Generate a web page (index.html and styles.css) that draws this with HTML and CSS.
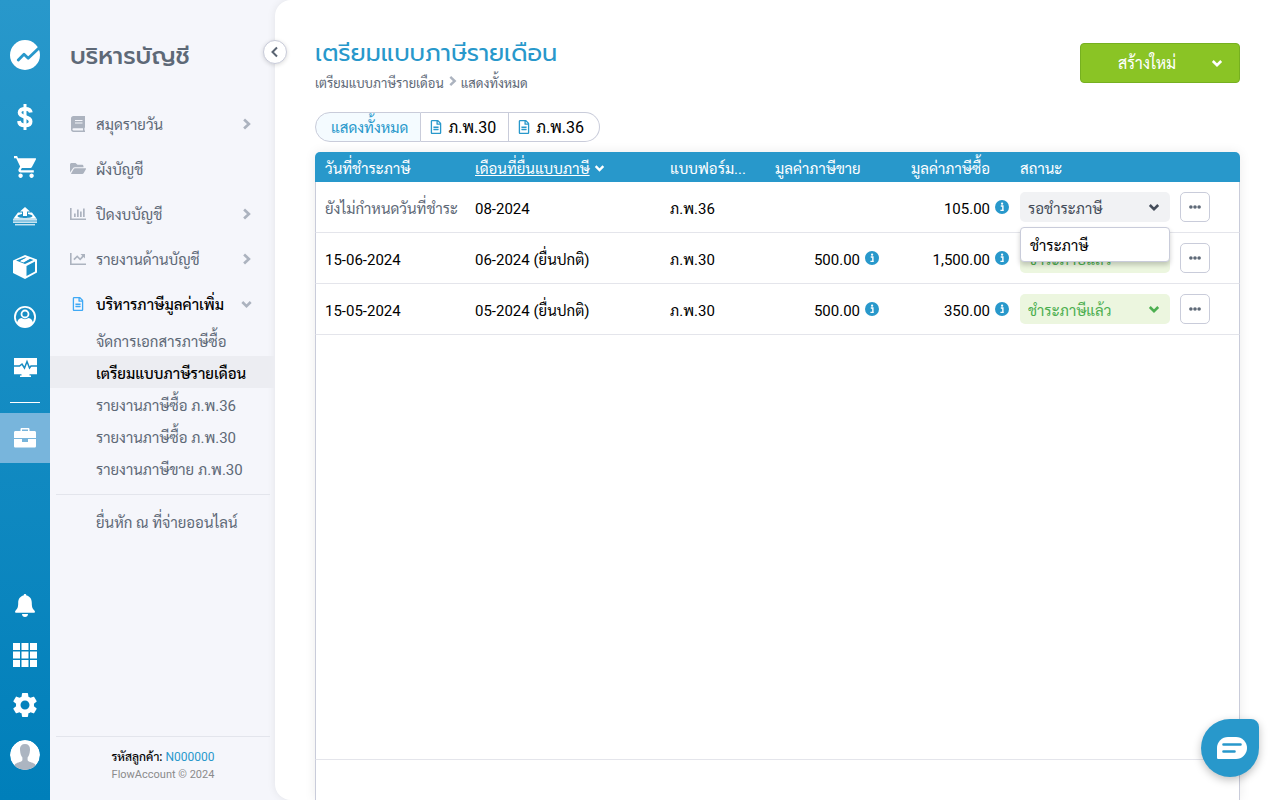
FILE: index.html
```html
<!DOCTYPE html>
<html lang="th">
<head>
<meta charset="utf-8">
<meta name="viewport" content="width=device-width, initial-scale=1">
<title>เตรียมแบบภาษีรายเดือน</title>
<link rel="stylesheet" href="styles.css">
</head>
<body>
<svg class="defs" aria-hidden="true">
  <symbol id="right" viewBox="0 0 10 10"><path d="M3 1.200 7 5 3 8.800" fill="none" stroke="currentColor" stroke-width="2.200"/></symbol>
  <symbol id="down" viewBox="0 0 12 12"><path d="M1.800 4 6 8.200 10.200 4" fill="none" stroke="currentColor" stroke-width="2.600"/></symbol>
  <symbol id="doc" viewBox="0 0 384 512"><path fill="currentColor" d="M288 248v28c0 6.600-5.400 12-12 12H108c-6.600 0-12-5.400-12-12v-28c0-6.600 5.400-12 12-12h168c6.600 0 12 5.400 12 12zm-12 72H108c-6.600 0-12 5.400-12 12v28c0 6.600 5.400 12 12 12h168c6.600 0 12-5.400 12-12v-28c0-6.600-5.400-12-12-12zm108-188.100V464c0 26.500-21.500 48-48 48H48c-26.500 0-48-21.500-48-48V48C0 21.500 21.500 0 48 0h204.100C264.800 0 277 5.100 286 14.100L369.900 98c9 8.900 14.100 21.200 14.100 33.900zm-128-80V128h76.100L256 51.900zM336 464V176H232c-13.300 0-24-10.700-24-24V48H48v416h288z"/></symbol>
  <symbol id="info" viewBox="0 0 16 16"><circle cx="8" cy="8" r="8" fill="currentColor"/><path d="M6.600 6.900h2.400v4.600M6.200 11.800h3.800" stroke="#fff" stroke-width="1.600" fill="none"/><circle cx="8.100" cy="4.200" r="1.300" fill="#fff"/></symbol>
  <symbol id="dots" viewBox="0 0 12 4"><circle cx="1.900" cy="2" r="1.800"/><circle cx="6" cy="2" r="1.800"/><circle cx="10.100" cy="2" r="1.800"/></symbol>
</svg>
<div class="app">
  <nav class="rail" aria-label="เมนูหลัก">
    <a class="rail-logo" href="#" aria-label="FlowAccount"><svg width="30" height="30" viewBox="0 0 30 30"><circle cx="15" cy="15" r="15" fill="#fff"/><path d="M8.300 20l5.700-5.800 4.200 4L30.500 6.500" fill="none" stroke="#2898cb" stroke-width="2.800" stroke-linecap="round" stroke-linejoin="round"/></svg></a>
    <a class="rail-item" href="#" aria-label="รายรับ"><svg width="16" height="26" viewBox="0 0 16 26"><path d="M13.800 8.500C13.500 6 11.500 4.800 8.200 4.800 5 4.800 2.600 6 2.600 8.600c0 5.600 11 3 11 8.800 0 2.600-2.400 4-5.600 4-3.400 0-5.800-1.400-6-4.400" fill="none" stroke="#fff" stroke-width="3.800"/><path d="M6.500 0h3v26h-3z" fill="#fff"/></svg></a>
    <a class="rail-item" href="#" aria-label="รายจ่าย"><svg width="22" height="22" viewBox="1 2 20 20"><path fill="#fff" d="M7 18c-1.100 0-2 .9-2 2s.9 2 2 2 2-.9 2-2-.9-2-2-2zM1 2v2h2l3.600 7.600-1.400 2.400c-.7 1.300.3 3 1.800 3h12v-2H7.400c-.1 0-.2-.1-.2-.3l.9-1.700h7.500c.7 0 1.400-.4 1.700-1L21 5c.2-.6 0-1-.9-1H4.700L3.800 2zM17 18c-1.100 0-2 .9-2 2s.9 2 2 2 2-.9 2-2-.9-2-2-2z"/></svg></a>
    <a class="rail-item" href="#" aria-label="นำส่ง"><svg width="24" height="20" viewBox="0 0 24 20"><path fill="#fff" fill-rule="evenodd" d="M12 0l5 4.600h-3V9h-4V4.600H7zM5 5.500h4V7C6 7.500 4.500 8.300 4.500 9c0 1.300 3.500 2 7.500 2s7.500-.7 7.500-2c0-.7-1.500-1.500-4.500-2V5.500h4l4.700 6.200H.3zM0 12.300h24v1.300H0zM0 14.600h24v1.200H0z"/><path d="M2 17.700h20" stroke="#fff" stroke-width="1.500" opacity=".75"/></svg></a>
    <a class="rail-item" href="#" aria-label="สินค้า"><svg width="24" height="24" viewBox="0 0 24 24"><path fill="#fff" fill-rule="evenodd" d="M12 0l12 4.500v13L12 24 0 18V5.500zM13.500 11v10l8.500-4.500v-10zM3 5.500l9 3.500 8.500-4-3.500-1.200-6.500 3.700L7 6.300l6.500-3.500L12 2.300z"/><path d="M7.500 5.700l6-3 3 1-6 3.200z" fill="#fff"/></svg></a>
    <a class="rail-item" href="#" aria-label="ผู้ติดต่อ"><svg width="22" height="22" viewBox="0 0 22 22"><circle cx="11" cy="11" r="10.100" fill="none" stroke="#fff" stroke-width="1.800"/><circle cx="11" cy="8" r="3.500" fill="none" stroke="#fff" stroke-width="1.800"/><path fill="#fff" d="M3 17c.5-3 2-4.500 4.500-5 2 1.500 5 1.500 7 0 2.500.5 4 2 4.500 5l-4 4H7z"/></svg></a>
    <a class="rail-item" href="#" aria-label="ภาพรวม"><svg width="23" height="19" viewBox="0 0 23 19"><path fill="#fff" d="M0 0h23v16.300h-7.500v1.200H17V19H6v-1.500h1.500v-1.200H0z"/><path d="M0 8h5.500L8 6l2.500 4 2.500-6.500L15.500 10l1.500-2h6" fill="none" stroke="#188bc2" stroke-width="1.500"/></svg></a>
    <hr class="rail-line">
    <a class="rail-item rail-active" href="#" aria-current="page" aria-label="บริหารบัญชี"><svg width="22" height="20" viewBox="0 0 22 20"><path fill="#fff" fill-rule="evenodd" d="M6.500 3V1.200C6.500.5 7 0 7.700 0h6.600c.7 0 1.200.5 1.200 1.200V3h5c.9 0 1.500.6 1.500 1.500V10H0V4.500C0 3.600.6 3 1.500 3zM8 3h6V1.500H8zM0 11h8v3h6v-3h8v7c0 1-.6 1.600-1.500 1.600h-19C.6 19.600 0 19 0 18z"/></svg></a>
    <div class="rail-gap"></div>
    <a class="rail-item" href="#" aria-label="แจ้งเตือน"><svg width="20" height="23" viewBox="0 0 20 23"><path fill="#fff" d="M10 0c-.9 0-1.400.6-1.400 1.500C5 2.200 3.200 5 3.200 9c0 5-1.200 6-2.600 7.400C-.4 17.500 0 18.700 1.300 18.700h17.400c1.300 0 1.700-1.200.7-2.300C18 15 16.800 14 16.800 9c0-4-1.800-6.800-5.400-7.500C11.400.6 10.900 0 10 0zM7 20h6c0 1.700-1.300 3-3 3s-3-1.300-3-3z"/></svg></a>
    <a class="rail-item" href="#" aria-label="แอป"><svg width="24" height="24" viewBox="0 0 24 24" fill="#fff"><path d="M0 0h7v7H0zM8.500 0h7v7h-7zM17 0h7v7h-7zM0 8.500h7v7H0zM8.500 8.500h7v7h-7zM17 8.500h7v7h-7zM0 17h7v7H0zM8.500 17h7v7h-7zM17 17h7v7h-7z"/></svg></a>
    <a class="rail-item" href="#" aria-label="ตั้งค่า"><svg width="30" height="30" viewBox="0 0 24 24"><path fill="#fff" d="M19.140 12.940c.04-.3.060-.61.060-.94s-.02-.64-.07-.94l2.030-1.580c.18-.14.230-.41.120-.61l-1.920-3.320c-.12-.22-.37-.29-.59-.22l-2.390.96c-.5-.38-1.030-.7-1.620-.94L14.400 2.810c-.04-.24-.24-.41-.48-.41h-3.840c-.24 0-.43.17-.47.41L9.250 5.350c-.59.24-1.130.57-1.620.94l-2.390-.96c-.22-.08-.47 0-.59.220L2.740 8.870c-.12.210-.08.470.12.610l2.030 1.580c-.05.300-.09.630-.09.940s.02.640.07.940l-2.030 1.580c-.18.140-.23.410-.12.610l1.920 3.320c.12.220.370.290.590.220l2.390-.96c.5.380 1.030.7 1.620.94l.36 2.540c.05.240.240.410.480.410h3.840c.24 0 .44-.17.470-.41l.36-2.540c.59-.24 1.130-.56 1.620-.94l2.390.96c.22.080.470 0 .59-.22l1.920-3.320c.12-.22.070-.47-.12-.61zM12 15.600c-1.980 0-3.600-1.620-3.600-3.600s1.620-3.600 3.600-3.600 3.600 1.620 3.600 3.600-1.620 3.600-3.600 3.600z"/></svg></a>
    <a class="rail-item" href="#" aria-label="โปรไฟล์"><svg class="avatar" width="30" height="30" viewBox="0 0 30 30"><circle cx="15" cy="15" r="15" fill="#fff"/><path fill="#acb5c1" d="M15 4c3.500 0 5.300 2.300 5 6-.3 4-1.200 6-2.400 7.500v2.500c.5 2.300 5 2 7.600 4.300L25 30H5l-.2-5.700C7.500 22 12 22.300 12.400 20v-2.500C11.200 16 10.300 14 10 10c-.3-3.700 1.500-6 5-6z"/></svg></a>
  </nav>

  <aside class="side">
    <h2 class="side-title">บริหารบัญชี</h2>
    <button class="collapse" type="button" aria-label="ย่อเมนู"><svg width="12" height="12" viewBox="0 0 12 12"><path d="M8 1.500 3.500 6 8 10.500" fill="none" stroke="#5a6472" stroke-width="2"/></svg></button>
    <nav class="menu" aria-label="บริหารบัญชี">
      <a class="item" href="#"><svg class="item-icon" viewBox="0 0 16 16"><path fill="currentColor" fill-rule="evenodd" d="M3.500 0H15v11.500l-.5.500v2.500h.5V16H3.500C2 16 1 15 1 13.500v-11C1 1 2 0 3.500 0zM5 4v1h7.500V4zm0 2.500v1h7.500v-1zM3.500 12.200a1.100 1.100 0 0 0 0 2.200h9.500v-2.200z"/></svg><span class="item-text">สมุดรายวัน</span><svg class="item-arrow"><use href="#right"/></svg></a>
      <a class="item" href="#"><svg class="item-icon" viewBox="0 0 16 16"><path fill="currentColor" d="M0 11.500v-8C0 2.700.7 2 1.500 2h4l2 1.800H12c.8 0 1.500.7 1.500 1.500v1H5c-1 0-1.700.4-2.200 1.200zM1 12.800 3.700 8c.3-.5.7-.8 1.300-.8h10.400c.6 0 .8.500.5 1l-2.300 4c-.3.500-.7.800-1.300.8H1.500z"/></svg><span class="item-text">ผังบัญชี</span></a>
      <a class="item" href="#"><svg class="item-icon" viewBox="0 0 16 16" fill="currentColor"><path d="M0 2h1.600v10.400H16V14H0zM4 7.500h1.700V11H4zM7 3.500h1.700V11H7zM10 5.500h1.700V11H10zM13 2.500h1.700V11H13z"/></svg><span class="item-text">ปิดงบบัญชี</span><svg class="item-arrow"><use href="#right"/></svg></a>
      <a class="item" href="#"><svg class="item-icon" viewBox="0 0 16 16" fill="currentColor"><path d="M0 2h1.600v10.400H16V14H0zM10.500 3H15v4.500l-1.400-1.400-3.400 3.400-3-3L4.500 9.300 3.300 8.100 7.200 4.200l3 3L12.200 4.700z"/></svg><span class="item-text">รายงานด้านบัญชี</span><svg class="item-arrow"><use href="#right"/></svg></a>
      <a class="item item-open" href="#" aria-expanded="true"><svg class="item-icon item-doc"><use href="#doc"/></svg><span class="item-text">บริหารภาษีมูลค่าเพิ่ม</span><svg class="item-arrow"><use href="#down"/></svg></a>
      <div class="submenu">
        <a class="sub" href="#">จัดการเอกสารภาษีซื้อ</a>
        <a class="sub sub-active" href="#" aria-current="page">เตรียมแบบภาษีรายเดือน</a>
        <a class="sub" href="#">รายงานภาษีซื้อ ภ.พ.36</a>
        <a class="sub" href="#">รายงานภาษีซื้อ ภ.พ.30</a>
        <a class="sub" href="#">รายงานภาษีขาย ภ.พ.30</a>
      </div>
      <hr class="side-line">
      <a class="sub sub-last" href="#">ยื่นหัก ณ ที่จ่ายออนไลน์</a>
    </nav>
    <footer class="side-foot">
      <p class="code"><b>รหัสลูกค้า:</b> <a href="#">N000000</a></p>
      <p class="copy">FlowAccount © 2024</p>
    </footer>
  </aside>

  <main class="main">
    <header class="head">
      <div>
        <h1 class="title">เตรียมแบบภาษีรายเดือน</h1>
        <div class="crumbs"><span>เตรียมแบบภาษีรายเดือน</span><svg class="crumb-arrow"><use href="#right"/></svg><span>แสดงทั้งหมด</span></div>
      </div>
      <button class="create" type="button"><span class="create-text">สร้างใหม่</span><svg class="chev"><use href="#down"/></svg></button>
    </header>
    <div class="tabs">
      <button class="tab tab-on" type="button">แสดงทั้งหมด</button>
      <button class="tab" type="button"><svg class="tab-icon"><use href="#doc"/></svg>ภ.พ.30</button>
      <button class="tab" type="button"><svg class="tab-icon"><use href="#doc"/></svg>ภ.พ.36</button>
    </div>
    <section class="panel">
      <table class="grid">
        <colgroup><col class="c-date"><col class="c-month"><col class="c-form"><col class="c-sale"><col class="c-buy"><col class="c-status"><col></colgroup>
        <thead>
          <tr><th>วันที่ชำระภาษี</th><th><a class="sort" href="#">เดือนที่ยื่นแบบภาษี</a><svg class="sort-arrow"><use href="#down"/></svg></th><th>แบบฟอร์ม...</th><th class="num-head">มูลค่าภาษีขาย</th><th class="num-head">มูลค่าภาษีซื้อ</th><th>สถานะ</th><th></th></tr>
        </thead>
        <tbody>
          <tr>
            <td class="muted">ยังไม่กำหนดวันที่ชำระ</td><td>08-2024</td><td>ภ.พ.36</td><td></td>
            <td><div class="num">105.00<svg class="info"><use href="#info"/></svg></div></td>
            <td><div class="status wait"><button class="status-box" type="button" aria-expanded="true">รอชำระภาษี</button><svg class="chev"><use href="#down"/></svg><div class="popup"><button class="option" type="button">ชำระภาษี</button></div></div></td>
            <td><button class="more" type="button" aria-label="เพิ่มเติม"><svg class="dots"><use href="#dots"/></svg></button></td>
          </tr>
          <tr>
            <td>15-06-2024</td><td>06-2024 (ยื่นปกติ)</td><td>ภ.พ.30</td>
            <td><div class="num">500.00<svg class="info"><use href="#info"/></svg></div></td>
            <td><div class="num">1,500.00<svg class="info"><use href="#info"/></svg></div></td>
            <td><div class="status paid"><select class="status-box" aria-label="สถานะ 06-2024"><option>ชำระภาษีแล้ว</option></select><svg class="chev"><use href="#down"/></svg></div></td>
            <td><button class="more" type="button" aria-label="เพิ่มเติม"><svg class="dots"><use href="#dots"/></svg></button></td>
          </tr>
          <tr>
            <td>15-05-2024</td><td>05-2024 (ยื่นปกติ)</td><td>ภ.พ.30</td>
            <td><div class="num">500.00<svg class="info"><use href="#info"/></svg></div></td>
            <td><div class="num">350.00<svg class="info"><use href="#info"/></svg></div></td>
            <td><div class="status paid"><select class="status-box" aria-label="สถานะ 05-2024"><option>ชำระภาษีแล้ว</option></select><svg class="chev"><use href="#down"/></svg></div></td>
            <td><button class="more" type="button" aria-label="เพิ่มเติม"><svg class="dots"><use href="#dots"/></svg></button></td>
          </tr>
        </tbody>
      </table>
      <div class="rest"></div>
      <div class="pager"></div>
    </section>
  </main>
</div>
<button class="chat" type="button" aria-label="แชท"><svg width="30" height="23" viewBox="0 0 30 23"><path fill="#fff" d="M11 0h8a11 11 0 0 1 0 22H1.500C.5 22 0 21.500 0 20.500V11A11 11 0 0 1 11 0z"/><path d="M6.500 7.500h17M6.500 14.500h11" stroke="#2898cb" stroke-width="2.600" stroke-linecap="round"/></svg></button>
</body>
</html>
```
FILE: styles.css
```css
* { box-sizing: border-box; }
body {
  margin: 0;
  font-family: Roboto, Sarabun, "Noto Sans Thai", "Noto Sans", sans-serif;
  font-size: 15px;
  line-height: 20px;
  color: #000;
  overflow: hidden;
}
button, select { font: inherit; color: inherit; cursor: pointer; }
a { color: inherit; text-decoration: none; }
svg { display: block; flex: none; }
h1, h2, p, hr { margin: 0; }
.defs { display: none; }
.app { display: flex; height: 100vh; background: #f5f6fb; }

.rail {
  width: 50px;
  flex: none;
  display: flex;
  flex-direction: column;
  padding: 30px 0 20px;
  background: linear-gradient(#2898cb, #007fba);
}
.rail-item, .rail-logo {
  height: 50px;
  display: grid;
  place-items: center;
}
.rail-logo { margin-bottom: 12px; }
.rail-line { width: 30px; margin: 10px auto; border: 0; border-top: 1px solid #fff; }
.rail-active { background: #78b5dc; }
.rail-gap { flex: 1; }
.avatar { border-radius: 50%; }

.side {
  position: relative;
  width: 225px;
  flex: none;
  display: flex;
  flex-direction: column;
  color: #5e6977;
}
.side-title {
  padding: 38px 20px 0;
  font-family: Prompt, "Noto Sans Thai", "Noto Sans", sans-serif;
  font-size: 24px;
  line-height: 36px;
  font-weight: 500;
}
.collapse {
  position: absolute;
  top: 40px;
  right: -12px;
  z-index: 2;
  width: 24px;
  height: 24px;
  display: grid;
  place-items: center;
  padding: 0;
  border: 1px solid #c9ccda;
  border-radius: 50%;
  background: #fff;
  box-shadow: 0 1px 4px rgba(0, 0, 0, .15);
}
.menu { flex: 1; padding-top: 28px; }
.item {
  display: flex;
  align-items: center;
  gap: 10px;
  height: 45px;
  padding: 0 22px 0 20px;
}
.item-icon { width: 16px; height: 16px; margin-bottom: 2px; color: #acb3bf; }
.item-doc { height: 14px; color: #3fa9f5; }
.item-text { flex: 1; padding-top: 1px; }
.item-arrow { width: 13px; height: 12px; margin-bottom: 2px; color: #acb3bf; }
.item-open { color: #000; font-weight: 500; }
.submenu { margin-top: -3px; }
.sub { display: block; padding: 8px 0 4px 46px; }
.sub-active { background: #ecedf2; color: #000; font-weight: 500; }
.side-line { margin: 10px 5px 0 6px; border: 0; border-top: 1px solid #e3e5ec; }
.sub-last { margin-top: 10px; }
.side-foot {
  margin: 0 5px 0 6px;
  padding: 11px 0 16px;
  border-top: 1px solid #e3e5ec;
  font-size: 12px;
  line-height: 18px;
  text-align: center;
}
.code { color: #000; }
.code b { font-weight: 500; }
.code a { color: #2898cb; }
.copy { color: #8b8b8b; font-size: 11px; }

.main {
  flex: 1;
  min-width: 0;
  display: flex;
  flex-direction: column;
  padding: 34px 40px 0;
  background: #fff;
  border-radius: 16px 0 0 16px;
  box-shadow: 0 0 8px rgba(0, 0, 0, .08);
}
.head { display: flex; justify-content: space-between; align-items: flex-start; }
.title {
  font-family: Prompt, "Noto Sans Thai", "Noto Sans", sans-serif;
  font-size: 24px;
  line-height: 38px;
  font-weight: 400;
  color: #2898cb;
}
.crumbs { display: flex; gap: 2px; padding-top: 2px; font-size: 13px; line-height: 20px; color: #5e6977; }
.crumb-arrow { width: 11px; height: 12px; margin: 1px 1px 0; color: #acb3bf; }
.create {
  display: flex;
  align-items: center;
  width: 160px;
  height: 40px;
  margin-top: 9px;
  padding: 2px 16px 0 24px;
  border: 1px solid #76b020;
  border-radius: 4px;
  background: #8ac425;
  color: #fff;
  font-size: 16px;
}
.create-text { width: 84px; margin-right: auto; }
.chev { width: 12px; height: 12px; }
.create .chev { margin-bottom: 2px; }
.tabs { display: flex; margin-top: 18px; }
.tab {
  display: flex;
  align-items: center;
  gap: 6px;
  height: 30px;
  padding: 2px 12px 0 9px;
  border: 1px solid #c9ccda;
  border-left: 0;
  background: #fff;
  font-size: 16px;
}
.tab-icon { width: 12px; height: 14px; margin-bottom: 2px; color: #2898cb; }
.tab:last-child { padding-right: 15px; border-radius: 0 15px 15px 0; }
.tab-on {
  padding-left: 15px;
  border-left: 1px solid #c9ccda;
  border-radius: 15px 0 0 15px;
  background: #f4fbff;
  color: #2898cb;
  font-size: 15px;
}

.panel {
  flex: 1;
  display: flex;
  flex-direction: column;
  margin-top: 10px;
  border-radius: 5px 5px 0 0;
  box-shadow: 0 0 12px rgba(0, 0, 0, .08);
}
.grid { width: 100%; table-layout: fixed; border-collapse: separate; border-spacing: 0; }
.c-date { width: 150px; }
.c-month { width: 195px; }
.c-form { width: 105px; }
.c-sale { width: 115px; }
.c-buy { width: 130px; }
.c-status { width: 160px; }
th, td { padding: 4px 0 0 10px; white-space: nowrap; }
th {
  height: 30px;
  background: #2898cb;
  color: #fff;
  font-weight: 400;
  text-align: left;
}
th:first-child { border-radius: 5px 0 0 0; }
th:last-child { border-radius: 0 5px 0 0; }
.num-head { padding-right: 20px; text-align: right; }
.sort { text-decoration: underline; }
.sort-arrow { display: inline-block; width: 11px; height: 12px; margin-left: 4px; }
td { height: 51px; border-bottom: 1px solid #e4e5eb; }
td:nth-child(n+6) { padding-top: 0; }
tbody td:first-child { padding-left: 9px; border-left: 1px solid #c9ccda; }
tbody td:last-child { border-right: 1px solid #c9ccda; }
.muted { color: #5e6977; }
.num { display: flex; justify-content: flex-end; align-items: center; gap: 5px; padding-right: 1px; }
.info { width: 14px; height: 14px; margin-bottom: 4px; color: #2898cb; }
.status { position: relative; display: grid; align-items: center; }
.status > * { grid-area: 1 / 1; }
.status-box {
  appearance: none;
  width: 100%;
  height: 30px;
  padding: 4px 8px 0;
  border: 0;
  border-radius: 5px;
  background: none;
  text-align: left;
}
.status .chev { justify-self: end; margin-right: 10px; pointer-events: none; }
.wait { color: #444c59; }
.wait .status-box { background: #f1f2f4; }
.paid { color: #4caf50; }
.paid .status-box { background: #ecf6df; }
.popup {
  position: absolute;
  top: 35px;
  left: 0;
  z-index: 3;
  width: 100%;
  padding: 2px 0;
  border: 1px solid #c9ccda;
  border-radius: 4px;
  background: #fff;
  box-shadow: 0 3px 5px rgba(0, 0, 0, .2);
}
.option { width: 100%; height: 29px; padding: 3px 9px 0; border: 0; background: none; color: #000; text-align: left; }
.more {
  display: grid;
  place-items: center;
  width: 30px;
  height: 30px;
  padding: 0;
  border: 1px solid #c9ccda;
  border-radius: 5px;
  background: #fff;
}
.dots { width: 12px; height: 4px; fill: #5e6977; }
.rest { flex: 1; border: solid #c9ccda; border-width: 0 1px; border-bottom: 1px solid #e4e5eb; }
.pager { height: 40px; border: solid #c9ccda; border-width: 0 1px; }

.chat {
  position: fixed;
  right: 21px;
  bottom: 23px;
  z-index: 4;
  width: 58px;
  height: 58px;
  display: grid;
  place-items: center;
  padding: 0 0 0 4px;
  border: 0;
  border-radius: 50% 8px 50% 50%;
  background: #2898cb;
  box-shadow: 0 3px 8px rgba(0, 0, 0, .25);
}
```
